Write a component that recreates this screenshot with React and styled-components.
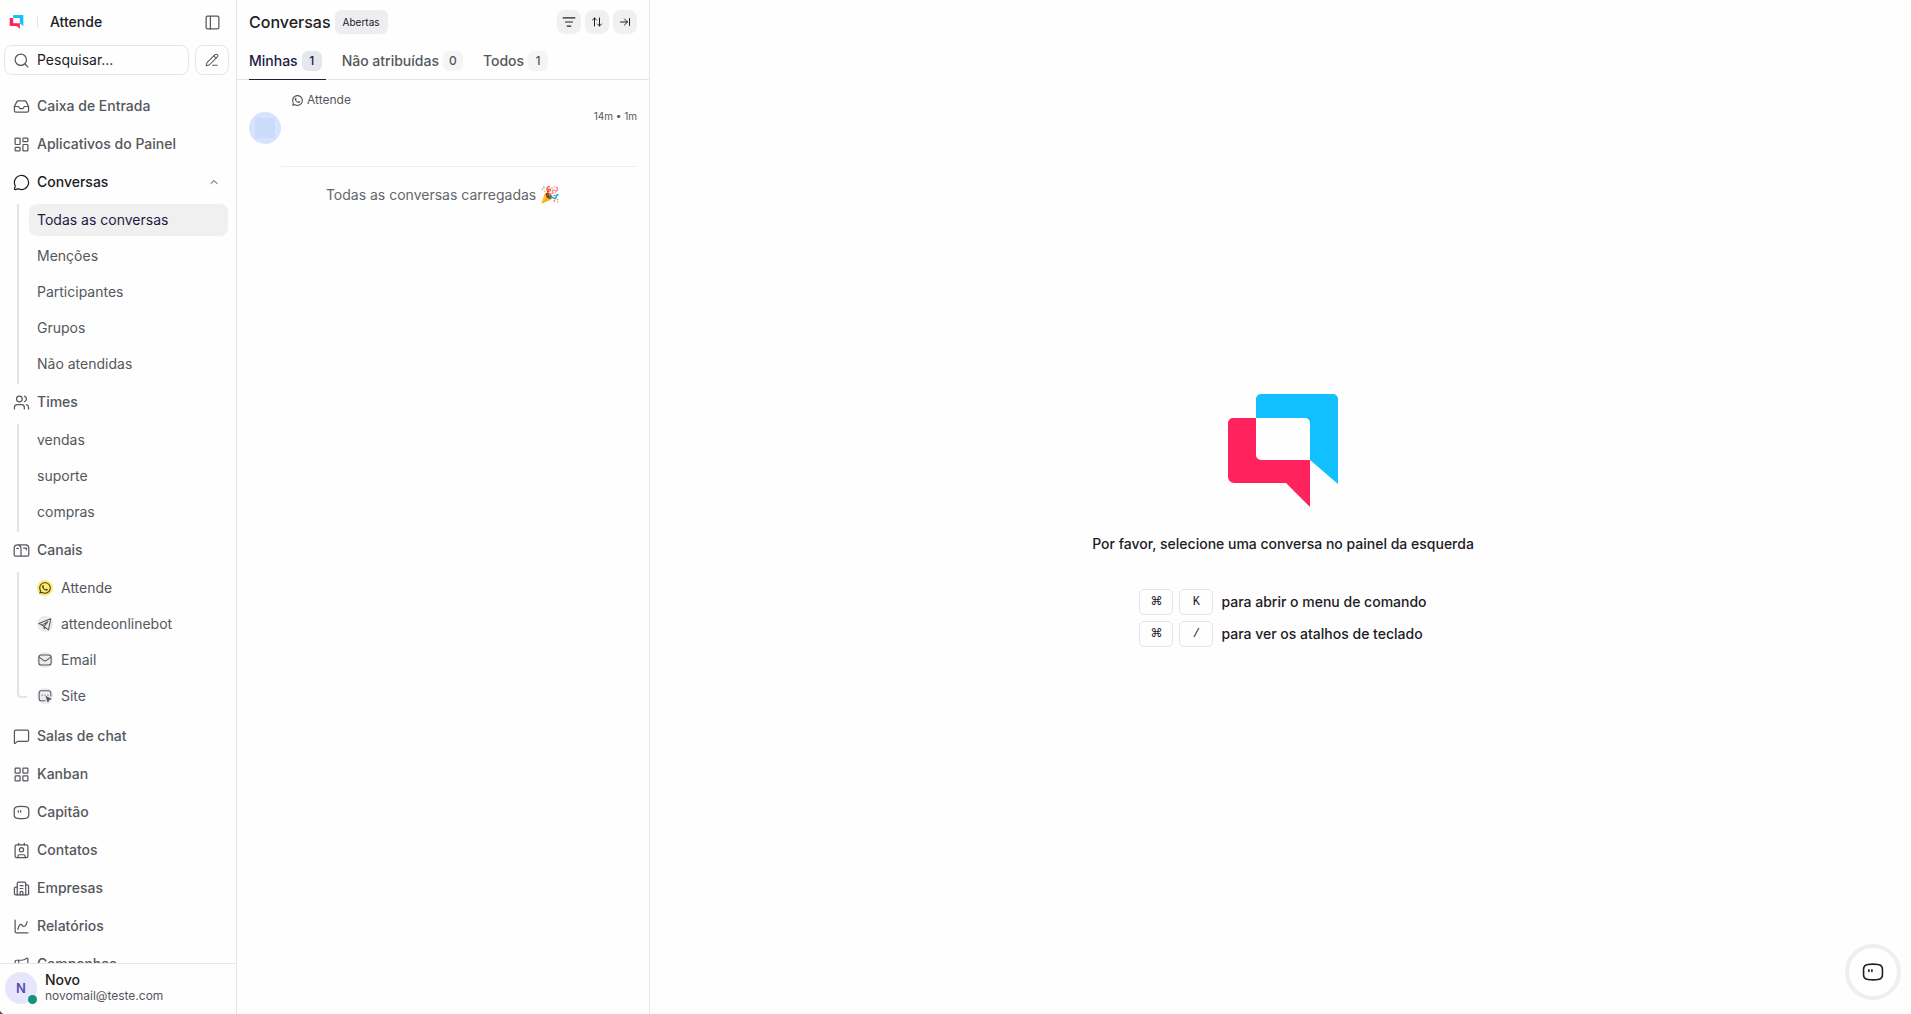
import React, { useState } from 'react';
import styled, { createGlobalStyle, css } from 'styled-components';
import {
  ArrowRightToLine,
  ArrowUpDown,
  Building2,
  ChartSpline,
  ChevronUp,
  Contact,
  Inbox,
  LayoutDashboard,
  LayoutGrid,
  ListFilter,
  Megaphone,
  MessageCircle,
  MessageSquare,
  PanelLeft,
  PencilLine,
  Search,
  Users,
} from 'lucide-react';
import { RiWhatsappLine } from 'react-icons/ri';

const colors = {
  text: '#1c2024',
  muted: '#54575d',
  brand: '#1f1a45',
  border: '#e6e6e8',
  line: '#e4e4e6',
  surface: '#f0f0f1',
  background: '#fefefe',
};

// Icons

const Logo = (props) => (
  <svg viewBox="0 0 110 113" aria-hidden="true" {...props}>
    <path
      fill="#12bfff"
      d="M28 24V5a5 5 0 0 1 5-5h72a5 5 0 0 1 5 5v85L82 66V29a5 5 0 0 0-5-5z"
    />
    <path
      fill="#ff235d"
      d="M28 24H5a5 5 0 0 0-5 5v54a6 6 0 0 0 6 6h52l24 24V66H33a5 5 0 0 1-5-5z"
    />
  </svg>
);

const lineIcon = {
  viewBox: '0 0 24 24',
  fill: 'none',
  stroke: 'currentColor',
  strokeWidth: 1.75,
  strokeLinecap: 'round',
  strokeLinejoin: 'round',
};

const CaptainIcon = ({ size }) => (
  <svg {...lineIcon} width={size} height={size}>
    <path d="M6.500 3.800C10 3.300 14 3.300 17.500 3.800C20.600 4.200 22.300 6 22.300 9V15C22.300 18 20.600 19.800 17.500 20.200C14 20.700 10 20.700 6.500 20.200C3.400 19.800 1.700 18 1.700 15V9C1.700 6 3.400 4.200 6.500 3.800Z" />
    <path d="M7.500 9.500v2M10.800 9.500v2" />
  </svg>
);

const MailboxIcon = ({ size }) => (
  <svg {...lineIcon} width={size} height={size}>
    <path d="M6.500 4H18a4.500 4.500 0 0 1 4.300 4.500V18a2 2 0 0 1-2 2H3.700a2 2 0 0 1-2-2V9a4.800 4.800 0 0 1 9.600 0v11" />
    <path d="M5.500 9h2M15 8.500h4v2.500" />
  </svg>
);

const TelegramIcon = ({ size }) => (
  <svg {...lineIcon} width={size} height={size}>
    <path d="M22 3 1.500 11.200 7 14l11 8z" />
    <path d="M7 14 17 8l-6.500 8v4l2.500-2" />
  </svg>
);

const MailIcon = ({ size }) => (
  <svg {...lineIcon} width={size} height={size}>
    <rect x="1.500" y="3.500" width="21" height="17" rx="4" />
    <path d="m2 7 7.500 5.500a4 4 0 0 0 5 0L22 7" />
  </svg>
);

const WebsiteIcon = ({ size }) => (
  <svg {...lineIcon} width={size} height={size}>
    <path d="M12 20H5.500A3.500 3.500 0 0 1 2 16.500v-10A3.500 3.500 0 0 1 5.500 3h13A3.500 3.500 0 0 1 22 6.500V12" />
    <path d="M7 10.500h.1M12 10.500h.1M17 10.500h.1" />
    <path d="m14 13 3 9 1.800-3.800L22 17z" fill="currentColor" />
  </svg>
);

const conversationLinks = ['Todas as conversas', 'Menções', 'Participantes', 'Grupos', 'Não atendidas'];
const teams = ['vendas', 'suporte', 'compras'];
const channels = [
  { name: 'Attende', icon: RiWhatsappLine, highlighted: true },
  { name: 'attendeonlinebot', icon: TelegramIcon },
  { name: 'Email', icon: MailIcon },
  { name: 'Site', icon: WebsiteIcon },
];
const bottomLinks = [
  { name: 'Salas de chat', icon: MessageSquare },
  { name: 'Kanban', icon: LayoutGrid },
  { name: 'Capitão', icon: CaptainIcon },
  { name: 'Contatos', icon: Contact },
  { name: 'Empresas', icon: Building2 },
  { name: 'Relatórios', icon: ChartSpline },
  { name: 'Campanhas', icon: Megaphone },
];
const tabs = [
  { name: 'Minhas', count: 1 },
  { name: 'Não atribuídas', count: 0 },
  { name: 'Todos', count: 1 },
];
const shortcuts = [
  { key: 'K', label: 'para abrir o menu de comando' },
  { key: '/', label: 'para ver os atalhos de teclado' },
];

function Sidebar() {
  const [current, setCurrent] = useState('Todas as conversas');

  return (
    <SidebarContainer>
      <AccountRow>
        <SmallLogo />
        <Divider />
        <AccountName>Attende</AccountName>
        <PlainButton aria-label="Recolher menu">
          <PanelLeft size={17} strokeWidth={1.75} />
        </PlainButton>
      </AccountRow>

      <SearchRow>
        <SearchBox>
          <Search size={17} strokeWidth={1.75} />
          <SearchInput type="text" aria-label="Pesquisar" placeholder="Pesquisar..." />
        </SearchBox>
        <ComposeButton aria-label="Nova conversa">
          <PencilLine size={14} strokeWidth={1.75} />
        </ComposeButton>
      </SearchRow>

      <Nav>
        <NavLink href="#caixa"><Inbox size={17} />Caixa de Entrada</NavLink>
        <NavLink href="#aplicativos"><LayoutDashboard size={17} />Aplicativos do Painel</NavLink>
        <NavGroup $active>
          <MessageCircle size={17} />
          <GroupName>Conversas</GroupName>
          <ChevronUp size={12} />
        </NavGroup>
        <SubList>
          {conversationLinks.map((name) => (
            <SubItem key={name}>
              <SubLink href="#conversas" $active={name === current} onClick={() => setCurrent(name)}>
                {name}
              </SubLink>
            </SubItem>
          ))}
        </SubList>
        <NavGroup><Users size={17} />Times</NavGroup>
        <SubList>
          {teams.map((name) => (
            <SubItem key={name}><SubLink href="#times">{name}</SubLink></SubItem>
          ))}
        </SubList>
        <NavGroup><MailboxIcon size={17} />Canais</NavGroup>
        <SubList $closed>
          {channels.map(({ name, icon: Icon, highlighted }) => (
            <SubItem key={name}>
              <SubLink href="#canais">
                <ChannelBadge $highlighted={highlighted}><Icon size={14} /></ChannelBadge>
                {name}
              </SubLink>
            </SubItem>
          ))}
        </SubList>
        {bottomLinks.map(({ name, icon: Icon }) => (
          <NavLink key={name} href="#menu"><Icon size={17} />{name}</NavLink>
        ))}
      </Nav>

      <Profile>
        <ProfileAvatar>N<StatusDot /></ProfileAvatar>
        <ProfileText>
          <ProfileName>Novo</ProfileName>
          <ProfileEmail>novomail@teste.com</ProfileEmail>
        </ProfileText>
      </Profile>
    </SidebarContainer>
  );
}

function ConversationList() {
  const [activeTab, setActiveTab] = useState('Minhas');

  return (
    <ListContainer>
      <ListHeader>
        <ListTitle>Conversas</ListTitle>
        <StatusLabel>Abertas</StatusLabel>
        <HeaderActions>
          <IconButton aria-label="Filtrar"><ListFilter size={14} /></IconButton>
          <IconButton aria-label="Ordenar"><ArrowUpDown size={12} /></IconButton>
          <IconButton aria-label="Expandir"><ArrowRightToLine size={12} /></IconButton>
        </HeaderActions>
      </ListHeader>

      <Tabs role="tablist">
        {tabs.map(({ name, count }) => (
          <Tab
            key={name}
            role="tab"
            aria-selected={name === activeTab}
            $active={name === activeTab}
            onClick={() => setActiveTab(name)}
          >
            {name}
            <TabCount $active={name === activeTab}>{count}</TabCount>
          </Tab>
        ))}
      </Tabs>

      <Card>
        <CardAvatar />
        <CardBody>
          <InboxName><RiWhatsappLine size={13} />Attende</InboxName>
          <CardTime>14m • 1m</CardTime>
        </CardBody>
      </Card>
      <EndMessage>Todas as conversas carregadas <Emoji>🎉</Emoji></EndMessage>
    </ListContainer>
  );
}

function EmptyState() {
  return (
    <EmptyContainer>
      <LargeLogo />
      <EmptyText>Por favor, selecione uma conversa no painel da esquerda</EmptyText>
      <Shortcuts>
        {shortcuts.map(({ key, label }) => (
          <Shortcut key={key}>
            <Key>⌘</Key>
            <Key>{key}</Key>
            <span>{label}</span>
          </Shortcut>
        ))}
      </Shortcuts>
    </EmptyContainer>
  );
}

function App() {
  return (
    <AppContainer>
      <GlobalStyle />
      <Sidebar />
      <ConversationList />
      <EmptyState />
      <CopilotButton aria-label="Abrir Capitão"><CaptainIcon size={22} /></CopilotButton>
      <WindowCorner />
    </AppContainer>
  );
}

const GlobalStyle = createGlobalStyle`
  *, *::before, *::after {
    box-sizing: border-box;
  }

  body {
    margin: 0;
    background: ${colors.background};
    color: ${colors.text};
    font-family: Inter, "Liberation Sans", sans-serif;
    font-size: 14px;
    line-height: 20px;
    -webkit-font-smoothing: antialiased;
  }

  button, input {
    font: inherit;
    color: inherit;
  }

  svg {
    flex-shrink: 0;
  }
`;

const AppContainer = styled.div`
  position: relative;
  display: flex;
  height: 100vh;
  overflow: hidden;
`;

const SidebarContainer = styled.aside`
  display: flex;
  flex-direction: column;
  flex: 0 0 237px;
  border-right: 1px solid ${colors.border};
`;

const AccountRow = styled.div`
  display: flex;
  align-items: center;
  height: 44px;
  padding: 0 15px 0 9px;
`;

const SmallLogo = styled(Logo)`
  width: 15px;
  height: 14px;
`;

const Divider = styled.span`
  width: 1px;
  height: 12px;
  margin: 0 12px 0 13px;
  background: ${colors.border};
`;

const AccountName = styled.span`
  flex: 1;
  font-weight: 500;
`;

const PlainButton = styled.button`
  display: flex;
  padding: 0;
  border: 0;
  background: none;
  color: ${colors.muted};
`;

const SearchRow = styled.div`
  display: flex;
  gap: 6px;
  padding: 1px 7px 0 4px;
`;

const SearchBox = styled.label`
  display: flex;
  flex: 1;
  align-items: center;
  gap: 7px;
  min-width: 0;
  height: 30px;
  padding: 0 8px;
  border: 1px solid ${colors.border};
  border-radius: 8px;
  color: ${colors.muted};
`;

const SearchInput = styled.input`
  width: 100%;
  min-width: 0;
  padding: 0;
  border: 0;
  outline: 0;
  background: none;
  color: ${colors.text};

  &::placeholder {
    color: ${colors.text};
    opacity: 1;
  }
`;

const ComposeButton = styled.button`
  display: flex;
  align-items: center;
  justify-content: center;
  width: 34px;
  height: 30px;
  border: 1px solid ${colors.border};
  border-radius: 8px;
  background: none;
  color: ${colors.muted};
`;

const Nav = styled.nav`
  display: flex;
  flex: 1;
  flex-direction: column;
  gap: 6px;
  min-height: 0;
  padding: 15px 8px 0 5px;
  overflow: hidden;
`;

const navItem = css`
  display: flex;
  flex-shrink: 0;
  align-items: center;
  gap: 7px;
  height: 32px;
  padding: 0 8px;
  border: 0;
  background: none;
  color: ${(props) => (props.$active ? colors.text : colors.muted)};
  font-weight: 500;
  text-align: left;
  text-decoration: none;

  svg {
    stroke-width: 1.75;
  }
`;

const NavLink = styled.a`
  ${navItem}
`;

const NavGroup = styled.button`
  ${navItem}
`;

const GroupName = styled.span`
  flex: 1;
`;

const SubList = styled.ul`
  display: flex;
  flex-direction: column;
  flex-shrink: 0;
  gap: 4px;
  margin: 0;
  padding: ${(props) => (props.$closed ? '0 0 2px 24px' : '0 0 0 24px')};
  list-style: none;

  ${(props) => props.$closed && css`
    li:last-child::before {
      width: 10px;
      height: 18px;
      border-bottom: 2px solid ${colors.line};
      border-bottom-left-radius: 4px;
    }
  `}
`;

const SubItem = styled.li`
  position: relative;

  &::before {
    content: '';
    position: absolute;
    top: 0;
    left: -12px;
    width: 2px;
    height: 36px;
    border-left: 2px solid ${colors.line};
  }
`;

const SubLink = styled.a`
  display: flex;
  align-items: center;
  gap: 8px;
  height: 32px;
  padding: 0 8px;
  border-radius: 8px;
  background: ${(props) => (props.$active ? colors.surface : 'none')};
  color: ${(props) => (props.$active ? colors.brand : colors.muted)};
  text-decoration: none;
`;

const ChannelBadge = styled.span`
  display: flex;
  align-items: center;
  justify-content: center;
  width: 16px;
  height: 16px;
  border-radius: 50%;
  background: ${(props) => (props.$highlighted ? '#fdea7b' : '#ececee')};
  color: ${(props) => (props.$highlighted ? '#4a4413' : 'inherit')};
`;

const Profile = styled.footer`
  display: flex;
  align-items: center;
  gap: 8px;
  height: 51px;
  padding: 0 5px 2px;
  border-top: 1px solid ${colors.border};
`;

const ProfileAvatar = styled.div`
  position: relative;
  display: flex;
  align-items: center;
  justify-content: center;
  width: 32px;
  height: 32px;
  border-radius: 50%;
  background: #e7e5fb;
  color: #5350b4;
  font-size: 13px;
  font-weight: 600;
`;

const StatusDot = styled.span`
  position: absolute;
  right: 0;
  bottom: 0;
  width: 9px;
  height: 9px;
  border-radius: 50%;
  background: #12917c;
`;

const ProfileText = styled.div`
  display: flex;
  flex-direction: column;
  line-height: 16px;
`;

const ProfileName = styled.span`
  font-weight: 500;
`;

const ProfileEmail = styled.span`
  color: ${colors.muted};
  font-size: 12px;
`;

const ListContainer = styled.section`
  flex: 0 0 413px;
  border-right: 1px solid ${colors.border};
`;

const ListHeader = styled.header`
  display: flex;
  align-items: center;
  height: 44px;
  padding: 0 12px;
`;

const ListTitle = styled.h1`
  margin: 0 4px 0 0;
  font-size: 16px;
  font-weight: 500;
`;

const StatusLabel = styled.span`
  padding: 2px 8px;
  border-radius: 6px;
  background: #eeeef0;
  font-size: 10px;
`;

const HeaderActions = styled.div`
  display: flex;
  gap: 4px;
  margin-left: auto;
`;

const IconButton = styled.button`
  display: flex;
  align-items: center;
  justify-content: center;
  width: 24px;
  height: 24px;
  padding: 0;
  border: 0;
  border-radius: 8px;
  background: ${colors.surface};
`;

const Tabs = styled.div`
  display: flex;
  gap: 16px;
  height: 36px;
  padding: 0 12px;
  border-bottom: 1px solid ${colors.border};
`;

const Tab = styled.button`
  display: flex;
  align-items: center;
  gap: 4px;
  height: 36px;
  padding: 0 4px 0 0;
  border: 0;
  border-bottom: 1px solid ${(props) => (props.$active ? colors.brand : 'transparent')};
  padding-bottom: 1px;
  background: none;
  color: ${(props) => (props.$active ? colors.brand : colors.muted)};
  font-weight: 500;
`;

const TabCount = styled.span`
  width: 20px;
  border-radius: 6px;
  background: ${(props) => (props.$active ? '#e6e6ee' : '#f5f5f6')};
  font-size: 12px;
  text-align: center;
`;

const Card = styled.article`
  display: flex;
  align-items: center;
  padding: 0 12px;
`;

const CardAvatar = styled.div`
  display: grid;
  place-items: center;
  width: 32px;
  height: 32px;
  margin-top: 9px;
  border-radius: 50%;
  background: #d9e2fc;

  &::after {
    content: '';
    width: 20px;
    height: 20px;
    background: #cbdcfb;
  }
`;

const CardBody = styled.div`
  display: flex;
  flex: 1;
  flex-direction: column;
  height: 87px;
  padding: 12px 0 0 10px;
  border-bottom: 1px solid #eeeef0;
  color: ${colors.muted};
  line-height: 16px;
`;

const InboxName = styled.span`
  display: flex;
  align-items: center;
  gap: 3px;
  font-size: 12px;
`;

const CardTime = styled.time`
  align-self: flex-end;
  font-size: 10px;
`;

const EndMessage = styled.p`
  margin: 0;
  padding: 18px 12px;
  color: #63666c;
  text-align: center;
`;

const Emoji = styled.span`
  font-family: "Noto Color Emoji", sans-serif;
  font-size: 16px;
  line-height: 16px;
`;

const EmptyContainer = styled.main`
  display: flex;
  flex: 1;
  flex-direction: column;
  align-items: center;
  justify-content: center;
  padding: 26px 0 0 5px;
  font-weight: 500;
`;

const LargeLogo = styled(Logo)`
  width: 110px;
  height: 113px;
`;

const EmptyText = styled.p`
  margin: 27px 0 35px;
`;

const Shortcuts = styled.div`
  display: flex;
  flex-direction: column;
  gap: 6px;
`;

const Shortcut = styled.div`
  display: flex;
  align-items: center;
  gap: 6px;

  span {
    margin-left: 2px;
  }
`;

const Key = styled.kbd`
  width: 34px;
  height: 26px;
  border: 1px solid ${colors.border};
  border-radius: 5px;
  font-family: "Liberation Mono", "DejaVu Sans", monospace;
  font-size: 12px;
  font-weight: 400;
  line-height: 24px;
  text-align: center;
`;

const CopilotButton = styled.button`
  position: absolute;
  right: 10px;
  bottom: 14px;
  display: flex;
  align-items: center;
  justify-content: center;
  width: 56px;
  height: 56px;
  padding: 0;
  border: 4px solid #efeff0;
  border-radius: 50%;
  background: #fff;
`;

const WindowCorner = styled.div`
  position: absolute;
  bottom: 0;
  left: 0;
  width: 6px;
  height: 6px;
  background: radial-gradient(circle at 100% 0, transparent 6px, #46524f 7px);
`;

export default App;
